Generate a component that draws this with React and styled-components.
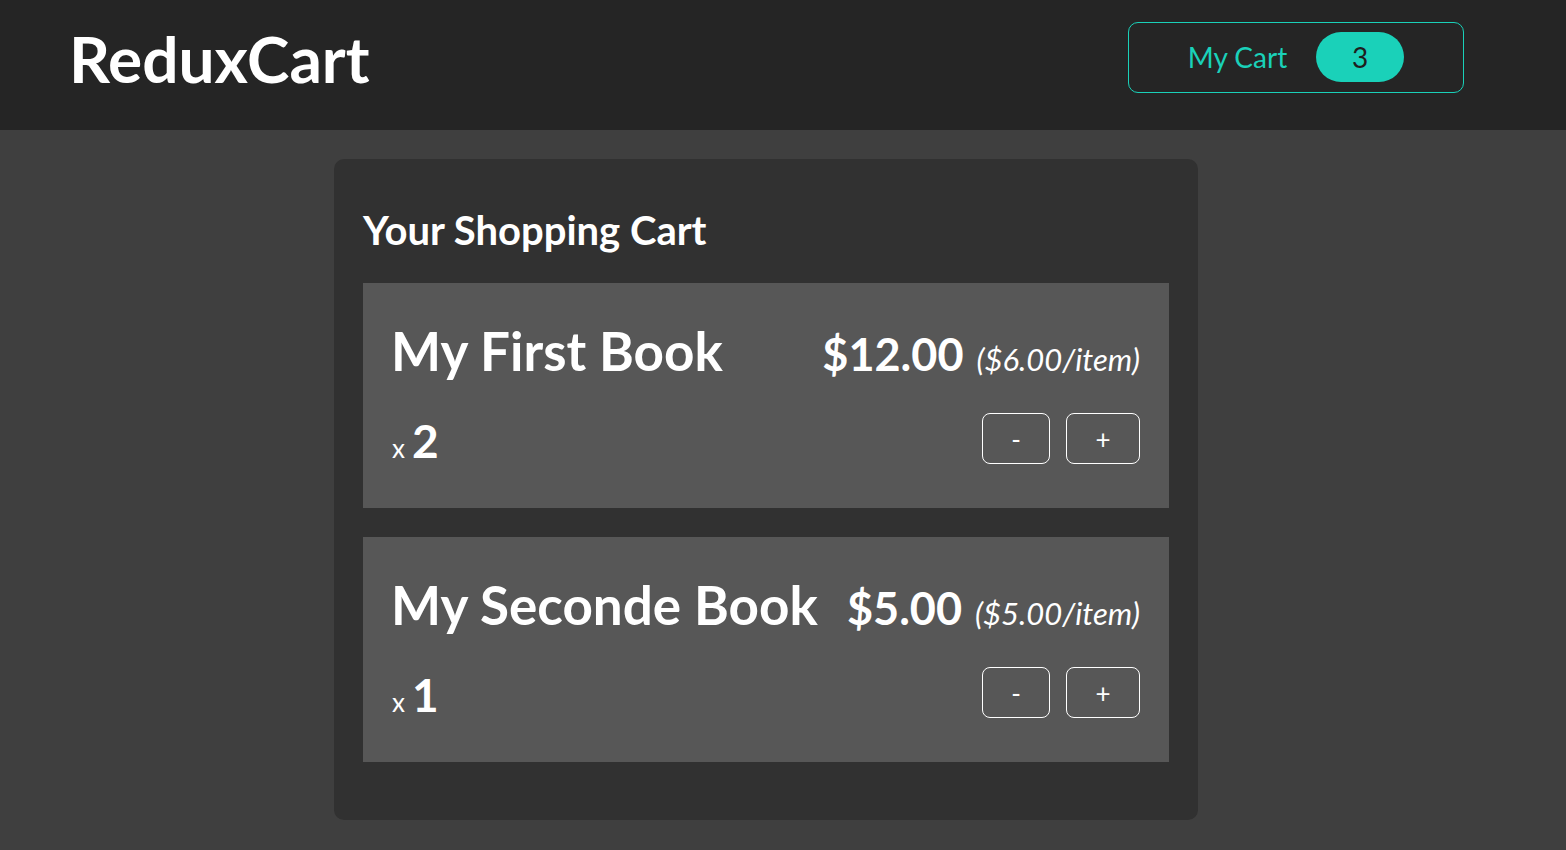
import React from "react";
import styled, { createGlobalStyle } from "styled-components";

const GlobalStyle = createGlobalStyle`
  * { box-sizing: border-box; }
  html, body {
    margin: 0;
    padding: 0;
    background: #3f3f3f;
    font-family: Lato, "Open Sans", sans-serif;
    color: #ffffff;
  }
  #root { min-height: 100vh; }
`;

const items = [
  { id: "b1", title: "My First Book", price: 6, quantity: 2 },
  { id: "b2", title: "My Seconde Book", price: 5, quantity: 1 },
];

export default function App() {
  const totalQuantity = items.reduce((sum, item) => sum + item.quantity, 0);
  return (
    <>
      <GlobalStyle />
      <Header>
        <Logo>ReduxCart</Logo>
        <CartButton>
          <span>My Cart</span>
          <Badge>{totalQuantity}</Badge>
        </CartButton>
      </Header>
      <Main>
        <Card>
          <CardTitle>Your Shopping Cart</CardTitle>
          <List>
            {items.map((item) => (
              <Item key={item.id}>
                <ItemHead>
                  <ItemTitle>{item.title}</ItemTitle>
                  <Price>
                    ${(item.price * item.quantity).toFixed(2)}
                    <PerItem>(${item.price.toFixed(2)}/item)</PerItem>
                  </Price>
                </ItemHead>
                <ItemFoot>
                  <Quantity>
                    <small>x</small>
                    <span>{item.quantity}</span>
                  </Quantity>
                  <Actions>
                    <ActionButton $wide={false}>-</ActionButton>
                    <ActionButton $wide>+</ActionButton>
                  </Actions>
                </ItemFoot>
              </Item>
            ))}
          </List>
        </Card>
      </Main>
    </>
  );
}

const Header = styled.header`
  height: 130px;
  background: #252525;
  display: flex;
  align-items: center;
  justify-content: space-between;
  padding: 0 102px 4px 69px;
`;

const Logo = styled.h1`
  margin: 0 0 8px;
  font-size: 64px;
  font-weight: 700;
  line-height: 1;
  color: #ffffff;
`;

const CartButton = styled.button`
  width: 336px;
  height: 71px;
  display: flex;
  align-items: center;
  justify-content: center;
  gap: 29px;
  background: transparent;
  border: 1px solid #1ad1b9;
  border-radius: 10px;
  color: #1ad1b9;
  font-family: inherit;
  font-size: 28px;
  cursor: pointer;
  margin-bottom: 12px;
`;

const Badge = styled.span`
  width: 88px;
  height: 50px;
  border-radius: 25px;
  background: #1ad1b9;
  color: #1e1e1e;
  display: flex;
  align-items: center;
  justify-content: center;
  font-size: 28px;
`;

const Main = styled.main`
  padding: 29px 0 30px 334px;
`;

const Card = styled.section`
  width: 864px;
  background: #313131;
  border-radius: 10px;
  padding: 51px 29px 58px;
`;

const CardTitle = styled.h2`
  margin: 0 0 33px;
  font-size: 40px;
  font-weight: 700;
  line-height: 1;
`;

const List = styled.ul`
  list-style: none;
  margin: 0;
  padding: 0;
  display: flex;
  flex-direction: column;
  gap: 29px;
`;

const Item = styled.li`
  background: #575757;
  padding: 41px 29px 44px 28px;
  display: flex;
  flex-direction: column;
  gap: 35px;
`;

const ItemHead = styled.div`
  display: flex;
  justify-content: space-between;
  align-items: baseline;
  height: 54px;
`;

const ItemTitle = styled.h3`
  margin: 0;
  font-size: 53px;
  font-weight: 700;
  line-height: 1;
`;

const Price = styled.div`
  display: flex;
  align-items: baseline;
  gap: 13px;
  font-size: 45px;
  font-weight: 700;
  line-height: 1;
  white-space: nowrap;
`;

const PerItem = styled.span`
  font-size: 31px;
  font-weight: 400;
  font-style: italic;
`;

const ItemFoot = styled.div`
  display: flex;
  justify-content: space-between;
  align-items: center;
`;

const Quantity = styled.div`
  display: flex;
  align-items: baseline;
  gap: 7px;
  margin: 4px 0 0 1px;
  line-height: 1;
  small {
    font-size: 26px;
  }
  span {
    font-size: 46px;
    font-weight: 700;
  }
`;

const Actions = styled.div`
  display: flex;
  gap: 16px;
`;

const ActionButton = styled.button`
  width: ${(p) => (p.$wide ? "74px" : "68px")};
  height: 51px;
  background: transparent;
  border: 1px solid #ffffff;
  border-radius: 8px;
  color: #ffffff;
  font-family: inherit;
  font-size: 26px;
  cursor: pointer;
`;
